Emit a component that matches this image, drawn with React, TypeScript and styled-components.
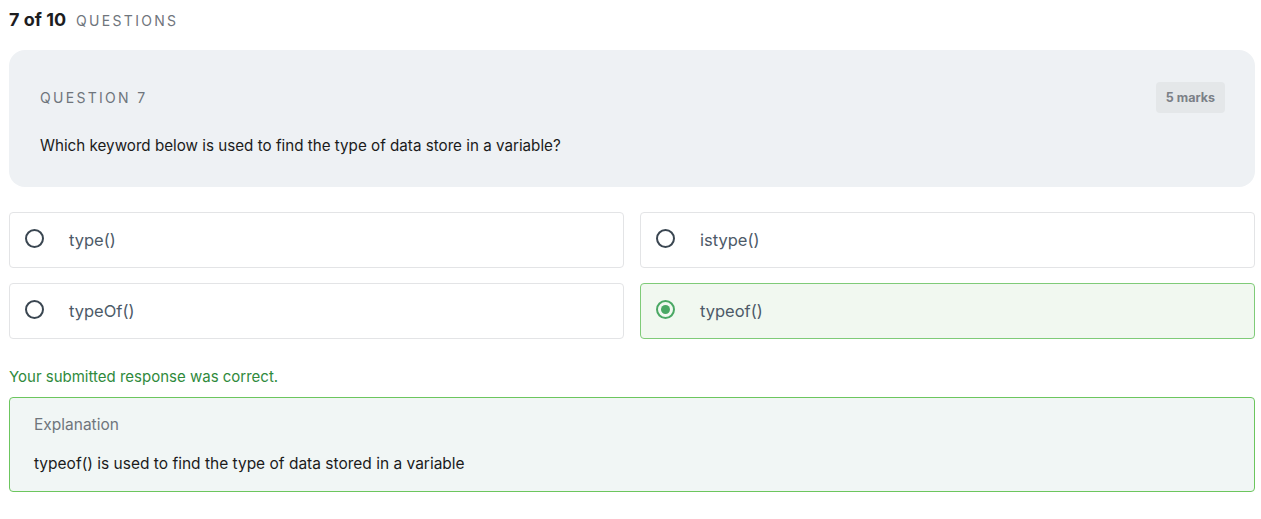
import React from "react";
import styled, { createGlobalStyle } from "styled-components";

const Global = createGlobalStyle`
  html, body { margin: 0; padding: 0; background: #ffffff; }
  body { font-family: Inter, "Noto Sans", sans-serif; color: #1f1f1f; }
  * { box-sizing: border-box; }
`;

const Page = styled.div`
  padding: 9px 6px 0 9px;
  display: flex;
  flex-direction: column;
`;

const Header = styled.div`
  display: flex;
  align-items: baseline;
  gap: 10px;
  height: 22px;
  margin-bottom: 19px;
`;

const Count = styled.span`
  font-size: 18px;
  font-weight: 700;
  color: #1d1d1f;
`;

const Label = styled.span`
  font-size: 14px;
  letter-spacing: 2.3px;
  color: #6f757c;
  text-transform: uppercase;
`;

const QuestionCard = styled.div`
  background: #eef1f4;
  border-radius: 16px;
  padding: 32px 30px 30px 31px;
  height: 137px;
  display: flex;
  flex-direction: column;
`;

const CardTop = styled.div`
  display: flex;
  justify-content: space-between;
  align-items: center;
  height: 31px;
`;

const Marks = styled.span`
  background: #e4e7e9;
  border-radius: 4px;
  padding: 0 10px;
  height: 31px;
  line-height: 31px;
  font-size: 12.5px;
  font-weight: 700;
  color: #7b8087;
`;

const QuestionText = styled.p`
  margin: 23px 0 0;
  font-size: 15.2px;
  color: #1b1b1b;
`;

const Options = styled.div`
  display: grid;
  grid-template-columns: 1fr 1fr;
  column-gap: 16px;
  row-gap: 15px;
  margin-top: 25px;
`;

const Option = styled.div<{ $selected?: boolean }>`
  height: 56px;
  border-radius: 4px;
  border: 1px solid ${(p) => (p.$selected ? "#7fcb78" : "#e3e4e6")};
  background: ${(p) => (p.$selected ? "#f1f8f0" : "#ffffff")};
  display: flex;
  align-items: center;
  padding: 0 0 0 15px;
  gap: 25px;
`;

const Radio = styled.span<{ $selected?: boolean }>`
  width: 19px;
  height: 19px;
  border-radius: 50%;
  border: 2px solid ${(p) => (p.$selected ? "#4aa864" : "#3a4651")};
  display: flex;
  align-items: center;
  justify-content: center;
  margin-top: -4px;
  flex-shrink: 0;
  &::after {
    content: "";
    display: ${(p) => (p.$selected ? "block" : "none")};
    width: 9px;
    height: 9px;
    border-radius: 50%;
    background: #4aa864;
  }
`;

const OptionText = styled.span`
  font-size: 16.5px;
  color: #4d5a68;
`;

const Feedback = styled.div`
  margin-top: 28px;
  font-size: 15px;
  color: #2f8a3c;
  height: 20px;
`;

const Explanation = styled.div`
  margin-top: 10px;
  border: 1px solid #6cc65e;
  border-radius: 4px;
  background: #f1f6f5;
  height: 95px;
  padding: 17px 24px 0 24px;
`;

const ExplTitle = styled.div`
  font-size: 15.5px;
  color: #6f757c;
  height: 20px;
`;

const ExplText = styled.div`
  margin-top: 19px;
  font-size: 15.5px;
  color: #1b1b1b;
`;

const options = [
  { text: "type()", selected: false },
  { text: "istype()", selected: false },
  { text: "typeOf()", selected: false },
  { text: "typeof()", selected: true },
];

export default function App() {
  return (
    <>
      <Global />
      <Page>
        <Header>
          <Count>7 of 10</Count>
          <Label>Questions</Label>
        </Header>
        <QuestionCard>
          <CardTop>
            <Label>Question 7</Label>
            <Marks>5 marks</Marks>
          </CardTop>
          <QuestionText>
            Which keyword below is used to find the type of data store in a variable?
          </QuestionText>
        </QuestionCard>
        <Options>
          {options.map((o) => (
            <Option key={o.text} $selected={o.selected}>
              <Radio $selected={o.selected} />
              <OptionText>{o.text}</OptionText>
            </Option>
          ))}
        </Options>
        <Feedback>Your submitted response was correct.</Feedback>
        <Explanation>
          <ExplTitle>Explanation</ExplTitle>
          <ExplText>typeof() is used to find the type of data stored in a variable</ExplText>
        </Explanation>
      </Page>
    </>
  );
}
